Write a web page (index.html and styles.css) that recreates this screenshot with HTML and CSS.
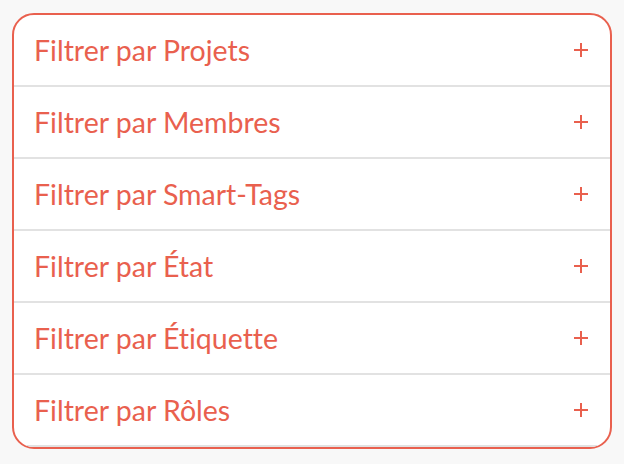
FILE: index.html
```html
<!DOCTYPE html>
<html lang="fr">
<head>
<meta charset="utf-8">
<link rel="stylesheet" href="styles.css">
</head>
<body>
<div class="card">
  <div class="row"><span class="label">Filtrer par Projets</span><svg class="plus" viewBox="0 0 16 16"><path d="M1 8H15M8 1V15"/></svg></div>
  <div class="row"><span class="label">Filtrer par Membres</span><svg class="plus" viewBox="0 0 16 16"><path d="M1 8H15M8 1V15"/></svg></div>
  <div class="row"><span class="label">Filtrer par Smart-Tags</span><svg class="plus" viewBox="0 0 16 16"><path d="M1 8H15M8 1V15"/></svg></div>
  <div class="row"><span class="label">Filtrer par État</span><svg class="plus" viewBox="0 0 16 16"><path d="M1 8H15M8 1V15"/></svg></div>
  <div class="row"><span class="label">Filtrer par Étiquette</span><svg class="plus" viewBox="0 0 16 16"><path d="M1 8H15M8 1V15"/></svg></div>
  <div class="row"><span class="label">Filtrer par Rôles</span><svg class="plus" viewBox="0 0 16 16"><path d="M1 8H15M8 1V15"/></svg></div>
</div>
</body>
</html>
```
FILE: styles.css
```css
html, body {
  margin: 0;
  padding: 0;
  background: #f8f8f8;
}
body {
  padding: 13px 0 0 12px;
  font-family: "Lato", "Noto Sans", sans-serif;
}
.card {
  width: 596px;
  border: 2px solid #e9604e;
  border-radius: 22px;
  background: #ffffff;
  overflow: hidden;
}
.row {
  height: 70px;
  border-bottom: 2px solid #e2e2e2;
  display: flex;
  align-items: center;
  justify-content: space-between;
  padding: 0 21px 0 20px;
}
.label {
  color: #e9604e;
  font-size: 28.5px;
  font-variant-ligatures: none;
  line-height: 1;
}
.plus {
  width: 16px;
  height: 16px;
  fill: none;
  stroke: #e9604e;
  stroke-width: 2;
}
```
